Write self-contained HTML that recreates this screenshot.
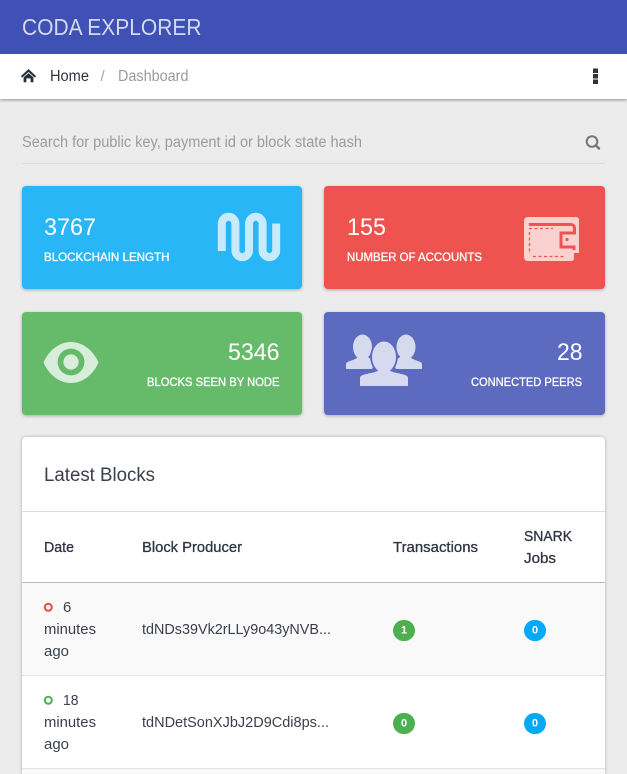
<!DOCTYPE html>
<html lang="en">
<head>
<meta charset="utf-8">
<title>Coda Explorer</title>
<style>
html,body{margin:0;padding:0;width:627px;height:774px;overflow:hidden;background:#ececec}
#p{position:relative;width:627px;height:774px;overflow:hidden;background:#ececec}
.b{position:absolute;box-sizing:border-box}
.card{border-radius:4px;box-shadow:0 1px 3px rgba(0,0,0,.28)}
svg{position:absolute;left:0;top:0;display:block}
text{font-family:"Liberation Sans",sans-serif}
.lab{font-size:12px;fill:#fff;stroke:#fff;stroke-width:.3px}
.num{font-size:24px;fill:#fff}
.d{font-size:15px;fill:#3a3f4b}
.h{font-size:15px;fill:#2f3440;stroke:#2f3440;stroke-width:.3px}
.bd{font-size:11px;font-weight:bold;fill:#fff;text-anchor:middle}
</style>
</head>
<body>
<div id="p">
<div class="b" style="left:0;top:54px;width:627px;height:45px;background:#fff;box-shadow:0 1px 3px rgba(0,0,0,.4)"></div>
<div class="b" style="left:0;top:0;width:627px;height:54px;background:#3f51b5"></div>
<div class="b" style="left:22px;top:163px;width:583px;height:1px;background:#dcdcdc"></div>
<div class="b card" style="left:22px;top:186px;width:280px;height:103px;background:#29b6f6"></div>
<div class="b card" style="left:324px;top:186px;width:281px;height:103px;background:#ef5350"></div>
<div class="b card" style="left:22px;top:312px;width:280px;height:103px;background:#66bb6a"></div>
<div class="b card" style="left:324px;top:312px;width:281px;height:103px;background:#5c6bc0"></div>
<div class="b" style="left:22px;top:437px;width:583px;height:337px;background:#fff;overflow:hidden;border-radius:4px 4px 0 0;box-shadow:0 0 3px rgba(0,0,0,.28)">
  <div class="b" style="left:0;top:74px;width:583px;height:1px;background:#dedede"></div>
  <div class="b" style="left:0;top:145px;width:583px;height:1px;background:#bbb"></div>
  <div class="b" style="left:0;top:146px;width:583px;height:92px;background:#f9f9f9"></div>
  <div class="b" style="left:0;top:238px;width:583px;height:1px;background:#e2e2e2"></div>
  <div class="b" style="left:0;top:331px;width:583px;height:1px;background:#e2e2e2"></div>
  <div class="b" style="left:0;top:332px;width:583px;height:5px;background:#f9f9f9"></div>
</div>
<svg width="627" height="774" viewBox="0 0 627 774" xmlns="http://www.w3.org/2000/svg">
  <text x="22" y="35" font-size="23" fill="#d5d9ef" textLength="179.500" lengthAdjust="spacingAndGlyphs">CODA EXPLORER</text>

  <path d="M28.500 69 L20.800 76.200 L22.300 77.600 L28.500 72 L34.700 77.600 L36.200 76.200 Z" fill="#263238"/>
  <path d="M23.600 77.400 L28.500 73.100 L33.400 77.400 V82.300 H30.600 V78.400 H26.400 V82.300 H23.600 Z" fill="#263238"/>
  <text x="50" y="81" font-size="15.500" fill="#2f3440" textLength="39" lengthAdjust="spacingAndGlyphs">Home</text>
  <text x="100.500" y="81" font-size="15" fill="#a5a5a5">/</text>
  <text x="118" y="81" font-size="15.500" fill="#9a9a9a" textLength="70.500" lengthAdjust="spacingAndGlyphs">Dashboard</text>
  <rect x="593" y="68.500" width="5" height="4.500" fill="#333"/>
  <rect x="593" y="74" width="5" height="4.500" fill="#333"/>
  <rect x="593" y="79.500" width="5" height="4.500" fill="#333"/>

  <text x="22" y="147" font-size="15.500" fill="#9c9c9c" textLength="340" lengthAdjust="spacingAndGlyphs">Search for public key, payment id or block state hash</text>
  <circle cx="592" cy="141.500" r="5.300" fill="none" stroke="#777" stroke-width="2"/>
  <path d="M595.800 145.300 L599 148.500" stroke="#777" stroke-width="2.400" stroke-linecap="round"/>

  <text class="num" x="44" y="235" textLength="52" lengthAdjust="spacingAndGlyphs">3767</text>
  <text class="lab" x="44" y="261" textLength="125.500" lengthAdjust="spacingAndGlyphs">BLOCKCHAIN LENGTH</text>
  <path d="M221.800 251 V223.600 a6.800 6.800 0 0 1 13.600 0 V250.400 a6.800 6.800 0 0 0 13.600 0 V223.600 a6.800 6.800 0 0 1 13.600 0 V250.400 a6.800 6.800 0 0 0 13.600 0 V223.500" fill="none" stroke="#c7ebfd" stroke-width="8"/>

  <text class="num" x="347" y="235" textLength="39" lengthAdjust="spacingAndGlyphs">155</text>
  <text class="lab" x="347" y="261" textLength="135" lengthAdjust="spacingAndGlyphs">NUMBER OF ACCOUNTS</text>
  <path fill="#fbd1d0" d="M528 217 H576 q3 0 3 3 V253 H574 V258 q0 3 -3 3 H528 q-4 0 -4 -4 V221 q0 -4 4 -4 Z"/>
  <path d="M529 224.500 H571 a3.500 3.500 0 0 1 3.500 3.500 V233 H561 V247 H575.500" fill="none" stroke="#ef5350" stroke-width="3"/>
  <path d="M574 247 V250" fill="none" stroke="#ef5350" stroke-width="3"/>
  <circle cx="567" cy="239.500" r="1.600" fill="#ef5350"/>
  <path d="M529 228.500 H553" stroke="#ef5350" stroke-width="1.300" stroke-dasharray="3 2.500" fill="none"/>
  <path d="M529.500 232 V254" stroke="#ef5350" stroke-width="1.300" stroke-dasharray="3 2.500" fill="none"/>
  <path d="M533 256.500 H566" stroke="#ef5350" stroke-width="1.300" stroke-dasharray="3 2.500" fill="none"/>

  <path d="M43.500 362.500 C48 352 58 342 71 342 C84 342 94 352 98.500 362.500 C94 373 84 383 71 383 C58 383 48 373 43.500 362.500 Z" fill="#d9eeda"/>
  <circle cx="71" cy="362" r="10.500" fill="none" stroke="#66bb6a" stroke-width="5.800"/>
  <text class="num" x="228" y="360" textLength="51.500" lengthAdjust="spacingAndGlyphs">5346</text>
  <text class="lab" x="147" y="386" textLength="132.500" lengthAdjust="spacingAndGlyphs">BLOCKS SEEN BY NODE</text>

  <g fill="#d6daef">
    <ellipse cx="362.500" cy="347" rx="9.500" ry="12.500"/>
    <path d="M346 369 V364 C346 361 355 360.500 358 357 H368 C370 359 373 360 376 361 L372 369 Z"/>
    <ellipse cx="406" cy="347" rx="9.500" ry="12.500"/>
    <path d="M422 369 V364 C422 361 413 360.500 410 357 H400 C398 359 395 360 392 361 L396 369 Z"/>
  </g>
  <ellipse cx="384" cy="357" rx="12.500" ry="16" fill="#5c6bc0" stroke="#5c6bc0" stroke-width="2.500"/>
  <path d="M360 386 V378 C360 372 375 373 379 369 H389 C393 373 408 372 408 378 V386 Z" fill="#5c6bc0" stroke="#5c6bc0" stroke-width="2.500"/>
  <ellipse cx="384" cy="357" rx="12" ry="15.500" fill="#d6daef"/>
  <path d="M360 386 V378 C360 373 375 374 379 370 H389 C393 374 408 373 408 378 V386 Z" fill="#d6daef"/>
  <text class="num" x="557" y="360" textLength="25.500" lengthAdjust="spacingAndGlyphs">28</text>
  <text class="lab" x="471" y="386" textLength="111" lengthAdjust="spacingAndGlyphs">CONNECTED PEERS</text>

  <text x="44" y="481" font-size="19" fill="#3a3f4b" textLength="111" lengthAdjust="spacingAndGlyphs">Latest Blocks</text>
  <text class="h" x="44" y="552" textLength="30" lengthAdjust="spacingAndGlyphs">Date</text>
  <text class="h" x="142" y="552" textLength="100" lengthAdjust="spacingAndGlyphs">Block Producer</text>
  <text class="h" x="393" y="552" textLength="85" lengthAdjust="spacingAndGlyphs">Transactions</text>
  <text class="h" x="524" y="541" textLength="48" lengthAdjust="spacingAndGlyphs">SNARK</text>
  <text class="h" x="524" y="563" textLength="32" lengthAdjust="spacingAndGlyphs">Jobs</text>

  <circle cx="48.300" cy="607.300" r="3.500" fill="none" stroke="#ef4444" stroke-width="2"/>
  <text class="d" x="63" y="612">6</text>
  <text class="d" x="44" y="634" textLength="52" lengthAdjust="spacingAndGlyphs">minutes</text>
  <text class="d" x="44" y="656" textLength="25" lengthAdjust="spacingAndGlyphs">ago</text>
  <text class="d" x="142" y="634" textLength="189" lengthAdjust="spacingAndGlyphs">tdNDs39Vk2rLLy9o43yNVB...</text>
  <rect x="393" y="620" width="22" height="21" rx="10.500" fill="#4caf50"/>
  <text class="bd" x="404" y="633.500">1</text>
  <rect x="524" y="620" width="22" height="21" rx="10.500" fill="#03a9f4"/>
  <text class="bd" x="535" y="633.500">0</text>

  <circle cx="48.300" cy="700.300" r="3.500" fill="none" stroke="#4caf50" stroke-width="2"/>
  <text class="d" x="63" y="705" textLength="15.500" lengthAdjust="spacingAndGlyphs">18</text>
  <text class="d" x="44" y="727" textLength="52" lengthAdjust="spacingAndGlyphs">minutes</text>
  <text class="d" x="44" y="749" textLength="25" lengthAdjust="spacingAndGlyphs">ago</text>
  <text class="d" x="142" y="727" textLength="187" lengthAdjust="spacingAndGlyphs">tdNDetSonXJbJ2D9Cdi8ps...</text>
  <rect x="393" y="713" width="22" height="21" rx="10.500" fill="#4caf50"/>
  <text class="bd" x="404" y="726.500">0</text>
  <rect x="524" y="713" width="22" height="21" rx="10.500" fill="#03a9f4"/>
  <text class="bd" x="535" y="726.500">0</text>
</svg>
</div>
</body>
</html>
